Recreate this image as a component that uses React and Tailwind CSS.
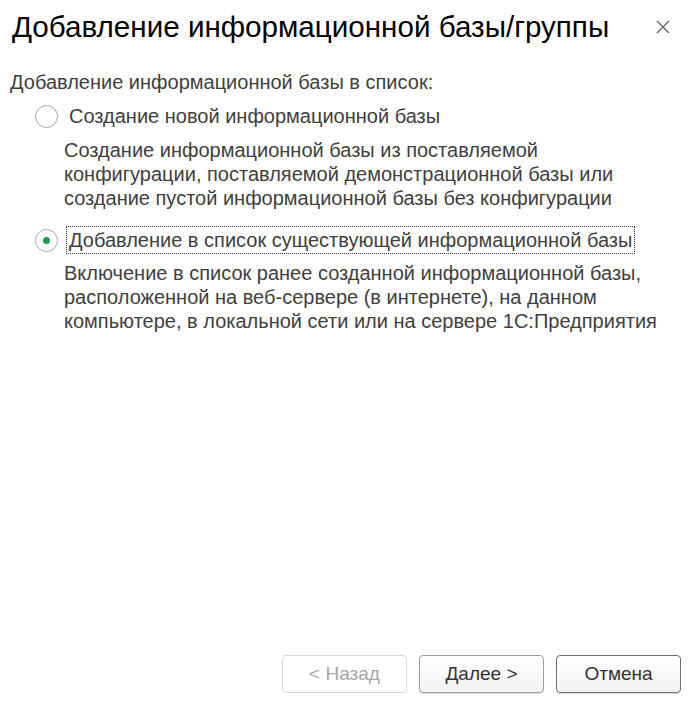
import React from 'react';

function Radio({ checked }) {
  return (
    <span className="flex h-[23px] w-[23px] shrink-0 items-center justify-center rounded-full border border-[#a8a8a8] bg-white">
      {checked && <span className="h-[7px] w-[7px] rounded-full bg-[#1b9e4b]" />}
    </span>
  );
}

function Button({ children, disabled, primary }) {
  return (
    <button
      disabled={disabled}
      className={
        disabled
          ? 'h-[38px] w-[125px] rounded-[4px] border border-[#d9d9d9] bg-white text-[19px] text-[#a6a6a6]'
          : primary
          ? 'h-[38px] w-[125px] rounded-[4px] border border-[#6e6e6e] bg-gradient-to-b from-white to-[#f2f2f2] text-[19px] text-[#333] shadow-[0_1px_1px_rgba(0,0,0,0.15)]'
          : 'h-[38px] w-[125px] rounded-[4px] border border-[#9a9a9a] bg-gradient-to-b from-white to-[#f2f2f2] text-[19px] text-[#333] shadow-[0_1px_1px_rgba(0,0,0,0.12)]'
      }
    >
      {children}
    </button>
  );
}

export default function App() {
  return (
    <div className="flex h-[706px] w-[688px] flex-col bg-white font-['Liberation_Sans',Arial,sans-serif] text-[#404040]">
      <div className="flex items-center justify-between pl-[12px] pr-[17px] pt-[8px]">
        <h1 className="text-[29.6px] leading-[38px] text-black">Добавление информационной базы/группы</h1>
        <svg width="16" height="16" viewBox="0 0 16 16" className="shrink-0">
          <path d="M2 2 L14 14 M14 2 L2 14" stroke="#666" strokeWidth="1.4" />
        </svg>
      </div>

      <div className="mt-[24px] px-[10px] text-[20px] leading-[24px]">
        Добавление информационной базы в список:
      </div>

      <div className="mt-[8px] flex h-[28px] items-center gap-[11px] pl-[35px]">
        <Radio />
        <span className="text-[20px] leading-[24px]">Создание новой информационной базы</span>
      </div>
      <div className="mt-[8px] pl-[64px] text-[20px] leading-[24px]">
        Создание информационной базы из поставляемой<br />
        конфигурации, поставляемой демонстрационной базы или<br />
        создание пустой информационной базы без конфигурации
      </div>

      <div className="mt-[16px] flex h-[28px] items-center gap-[8px] pl-[35px]">
        <Radio checked />
        <span className="border border-dotted border-[#333] px-[2px] text-[20px] leading-[26px]">
          Добавление в список существующей информационной базы
        </span>
      </div>
      <div className="mt-[7px] pl-[64px] text-[20px] leading-[24px]">
        Включение в список ранее созданной информационной базы,<br />
        расположенной на веб-сервере (в интернете), на данном<br />
        компьютере, в локальной сети или на сервере 1С:Предприятия
      </div>

      <div className="mt-auto flex justify-end gap-[12px] pb-[13px] pr-[7px]">
        <Button disabled>&lt; Назад</Button>
        <Button>Далее &gt;</Button>
        <Button primary>Отмена</Button>
      </div>
    </div>
  );
}
